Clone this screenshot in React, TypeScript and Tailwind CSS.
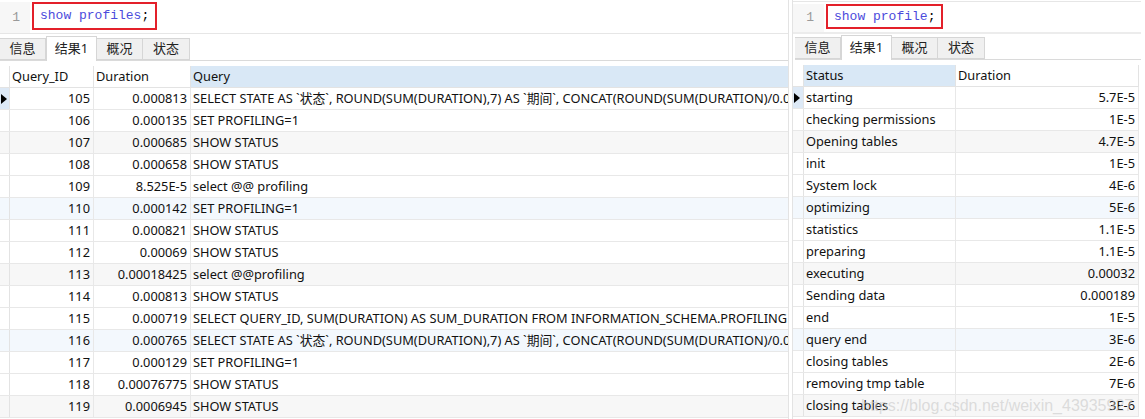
import React from "react";

const UI_FONT = "font-['Noto_Sans','Noto_Sans_CJK_SC',sans-serif]";

const queries: [string, string, string][] = [
  ["105", "0.000813", "SELECT STATE AS `状态`, ROUND(SUM(DURATION),7) AS `期间`, CONCAT(ROUND(SUM(DURATION)/0.000813*100,3), '%') AS `百分比`"],
  ["106", "0.000135", "SET PROFILING=1"],
  ["107", "0.000685", "SHOW STATUS"],
  ["108", "0.000658", "SHOW STATUS"],
  ["109", "8.525E-5", "select @@ profiling"],
  ["110", "0.000142", "SET PROFILING=1"],
  ["111", "0.000821", "SHOW STATUS"],
  ["112", "0.00069", "SHOW STATUS"],
  ["113", "0.00018425", "select @@profiling"],
  ["114", "0.000813", "SHOW STATUS"],
  ["115", "0.000719", "SELECT QUERY_ID, SUM(DURATION) AS SUM_DURATION FROM INFORMATION_SCHEMA.PROFILING GROUP BY QUERY_ID"],
  ["116", "0.000765", "SELECT STATE AS `状态`, ROUND(SUM(DURATION),7) AS `期间`, CONCAT(ROUND(SUM(DURATION)/0.000765*100,3), '%') AS `百分比`"],
  ["117", "0.000129", "SET PROFILING=1"],
  ["118", "0.00076775", "SHOW STATUS"],
  ["119", "0.0006945", "SHOW STATUS"],
];

const stages: [string, string][] = [
  ["starting", "5.7E-5"],
  ["checking permissions", "1E-5"],
  ["Opening tables", "4.7E-5"],
  ["init", "1E-5"],
  ["System lock", "4E-6"],
  ["optimizing", "5E-6"],
  ["statistics", "1.1E-5"],
  ["preparing", "1.1E-5"],
  ["executing", "0.00032"],
  ["Sending data", "0.000189"],
  ["end", "1E-5"],
  ["query end", "3E-6"],
  ["closing tables", "2E-6"],
  ["removing tmp table", "7E-6"],
  ["closing tables", "3E-6"],
];

// stripe pattern seen in the grid: every third row tinted, grey / blue alternating
function rowBg(i: number) {
  if (i % 3 !== 2) return "bg-white";
  return Math.floor(i / 3) % 2 === 0 ? "bg-[#f7f7f7]" : "bg-[#f3f8fd]";
}

function Editor({ code, gutter, box }: { code: string; gutter: string; box: string }) {
  return (
    <div className="flex h-full bg-white">
      <div className={`${gutter} bg-[#f7f7f7] flex items-center justify-end pr-[10px] text-[13px] text-[#9a9a9a] font-['Liberation_Mono',monospace]`}>
        1
      </div>
      <div className="pl-[2px]">
        <div className={`${box} border-2 border-[#e3202a] px-[6px] flex items-center font-['Liberation_Mono',monospace] text-[13px] text-[#4b4bdc]`}>
          {code}
          <span className="text-black">;</span>
        </div>
      </div>
    </div>
  );
}

function Tabs() {
  const tab = "h-[22px] flex items-center justify-center border border-[#d6d6d6] bg-[#f0f0f0] text-[13px] text-[#222]";
  return (
    <div className={`flex items-end h-[26px] border-b border-[#dadada] ${UI_FONT}`}>
      <div className={`${tab} w-[46px] border-l-0`}>信息</div>
      <div className="h-[25px] w-[51px] flex items-center justify-center border-t border-x border-[#d6d6d6] bg-white text-[13px] text-[#222] -mb-px">
        结果1
      </div>
      <div className={`${tab} w-[46px] border-l-0`}>概况</div>
      <div className={`${tab} w-[47px] border-l-0`}>状态</div>
    </div>
  );
}

function Indicator({ active }: { active: boolean }) {
  return (
    <div
      className={`h-full flex items-center justify-start pl-px border-r border-[#e3e3e3] ${
        active ? "bg-[#dde9f6]" : ""
      }`}
    >
      {active && (
        <svg width="6" height="10" viewBox="0 0 6 10">
          <path d="M0 0 L6 5 L0 10 Z" fill="#000" />
        </svg>
      )}
    </div>
  );
}

function LeftPanel() {
  return (
    <div className="w-[789px] shrink-0 flex flex-col border-r border-[#e3e3e3]">
      <div className="h-[33px] pt-[2px] bg-white">
        <Editor code="show profiles" gutter="w-[30px]" box="h-[28px]" />
      </div>
      <div className="h-px bg-[#e6e6e6]" />
      <div className="h-[1px]" />
      <Tabs />
      <div className="h-[5px]" />
      <div className={`text-[12.8px] text-[#111] ${UI_FONT}`}>
        <div className="grid grid-cols-[10px_84px_97px_1fr] h-[22px] border-b border-[#e3e3e3]">
          <div className="border-r border-[#e3e3e3]" />
          <div className="px-[2px] flex items-center border-r border-[#e3e3e3]">Query_ID</div>
          <div className="px-[2px] flex items-center border-r border-[#e3e3e3]">Duration</div>
          <div className="px-[2px] flex items-center bg-[#d9e8f6]">Query</div>
        </div>
        {queries.map(([id, dur, q], i) => (
          <div
            key={id}
            className={`grid grid-cols-[10px_84px_97px_1fr] h-[22px] border-b border-[#e8e8e8] ${rowBg(i)}`}
          >
            <Indicator active={i === 0} />
            <div className="px-[3px] flex items-center justify-end border-r border-[#e8e8e8]">{id}</div>
            <div className="px-[3px] flex items-center justify-end border-r border-[#e8e8e8]">{dur}</div>
            <div className="px-[2px] flex items-center overflow-hidden whitespace-nowrap">{q}</div>
          </div>
        ))}
      </div>
    </div>
  );
}

function RightPanel() {
  return (
    <div className="relative ml-[3px] w-[349px] shrink-0 flex flex-col border-l border-[#e3e3e3]">
      <div className="h-px" />
      <div className="h-px bg-[#e6e6e6]" />
      <div className="h-[30px] pt-[2px] overflow-hidden">
        <Editor code="show profile" gutter="w-[31px]" box="h-[25px]" />
      </div>
      <div className="h-[2px] bg-[#ececec]" />
      <div className="pl-[2px]">
        <Tabs />
      </div>
      <div className="h-[5px]" />
      <div className={`text-[12.8px] text-[#111] ${UI_FONT} w-[346px]`}>
        <div className="grid grid-cols-[11px_152px_1fr] h-[22px] border-b border-[#e3e3e3] border-r">
          <div className="border-r border-[#e3e3e3]" />
          <div className="px-[2px] flex items-center bg-[#d9e8f6] border-r border-[#e3e3e3]">Status</div>
          <div className="px-[2px] flex items-center">Duration</div>
        </div>
        {stages.map(([s, d], i) => (
          <div
            key={i}
            className={`grid grid-cols-[11px_152px_1fr] h-[22px] border-b border-r border-[#e8e8e8] ${rowBg(i)}`}
          >
            <Indicator active={i === 0} />
            <div className="px-[2px] flex items-center border-r border-[#e8e8e8] whitespace-nowrap">{s}</div>
            <div className="px-[3px] flex items-center justify-end">{d}</div>
          </div>
        ))}
      </div>
      <div className="absolute left-[68px] top-[394px] text-[16px] text-[#c8c8c8]/60 font-['Liberation_Sans',sans-serif] pointer-events-none whitespace-nowrap">
        https://blog.csdn.net/weixin_43935927
      </div>
    </div>
  );
}

export default function App() {
  return (
    <div className="w-[1145px] h-[419px] overflow-hidden bg-white flex">
      <LeftPanel />
      <RightPanel />
    </div>
  );
}
